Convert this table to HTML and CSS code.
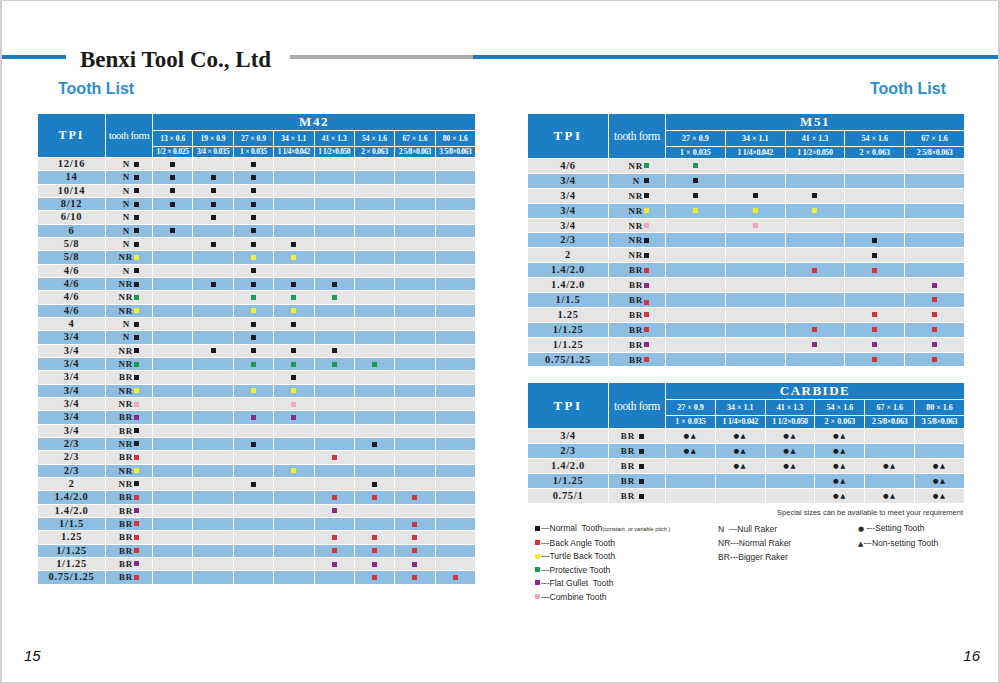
FILE: index.html
```html
<!DOCTYPE html>
<html lang="en">
<head>
<meta charset="utf-8">
<title>Benxi Tool Co., Ltd - Tooth List</title>
<link rel="stylesheet" href="styles.css">
</head>
<body>
<div class="page">
  <header class="masthead">
    <span class="rule rule-blue rule-lead"></span>
    <h1 class="brand">Benxi Tool Co., Ltd</h1>
    <span class="rule rule-gray"></span>
    <span class="rule rule-blue rule-tail"></span>
  </header>

  <div class="section-titles">
    <h2 class="section-title">Tooth List</h2>
    <h2 class="section-title">Tooth List</h2>
  </div>

  <main class="spread">
    <section class="sheet sheet-left">
      <table class="grid grid-m42">
        <colgroup><col class="w-tpi"><col class="w-tf"><col span="8"></colgroup>
        <thead>
          <tr class="hr1">
            <th rowspan="3" class="th-tpi">TPI</th>
            <th rowspan="3" class="th-tf">tooth form</th>
            <th colspan="8" class="th-grade">M42</th>
          </tr>
          <tr class="hr2">
            <th class="th-size">13 × 0.6</th><th class="th-size">19 × 0.9</th><th class="th-size">27 × 0.9</th><th class="th-size">34 × 1.1</th><th class="th-size">41 × 1.3</th><th class="th-size">54 × 1.6</th><th class="th-size">67 × 1.6</th><th class="th-size">80 × 1.6</th>
          </tr>
          <tr class="hr3 hr3-s">
            <th class="th-inch">1/2 × 0.025</th><th class="th-inch">3/4 × 0.035</th><th class="th-inch">1 × 0.035</th><th class="th-inch tight">1 1/4×0.042</th><th class="th-inch tight">1 1/2×0.050</th><th class="th-inch">2 × 0.063</th><th class="th-inch tight">2 5/8×0.063</th><th class="th-inch tight">3 5/8×0.063</th>
          </tr>
        </thead>
        <tbody>
          <tr><td class="tpi">12/16</td><td class="tf">N <i class="sq k"></i></td><td><i class="sq k"></i></td><td></td><td><i class="sq k"></i></td><td></td><td></td><td></td><td></td><td></td></tr>
          <tr><td class="tpi">14</td><td class="tf">N <i class="sq k"></i></td><td><i class="sq k"></i></td><td><i class="sq k"></i></td><td><i class="sq k"></i></td><td></td><td></td><td></td><td></td><td></td></tr>
          <tr><td class="tpi">10/14</td><td class="tf">N <i class="sq k"></i></td><td><i class="sq k"></i></td><td><i class="sq k"></i></td><td><i class="sq k"></i></td><td></td><td></td><td></td><td></td><td></td></tr>
          <tr><td class="tpi">8/12</td><td class="tf">N <i class="sq k"></i></td><td><i class="sq k"></i></td><td><i class="sq k"></i></td><td><i class="sq k"></i></td><td></td><td></td><td></td><td></td><td></td></tr>
          <tr><td class="tpi">6/10</td><td class="tf">N <i class="sq k"></i></td><td></td><td><i class="sq k"></i></td><td><i class="sq k"></i></td><td></td><td></td><td></td><td></td><td></td></tr>
          <tr><td class="tpi">6</td><td class="tf">N <i class="sq k"></i></td><td><i class="sq k"></i></td><td></td><td><i class="sq k"></i></td><td></td><td></td><td></td><td></td><td></td></tr>
          <tr><td class="tpi">5/8</td><td class="tf">N <i class="sq k"></i></td><td></td><td><i class="sq k"></i></td><td><i class="sq k"></i></td><td><i class="sq k"></i></td><td></td><td></td><td></td><td></td></tr>
          <tr><td class="tpi">5/8</td><td class="tf">NR<i class="sq y"></i></td><td></td><td></td><td><i class="sq y"></i></td><td><i class="sq y"></i></td><td></td><td></td><td></td><td></td></tr>
          <tr><td class="tpi">4/6</td><td class="tf">N <i class="sq k"></i></td><td></td><td></td><td><i class="sq k"></i></td><td></td><td></td><td></td><td></td><td></td></tr>
          <tr><td class="tpi">4/6</td><td class="tf">NR<i class="sq k"></i></td><td></td><td><i class="sq k"></i></td><td><i class="sq k"></i></td><td><i class="sq k"></i></td><td><i class="sq k"></i></td><td></td><td></td><td></td></tr>
          <tr><td class="tpi">4/6</td><td class="tf">NR<i class="sq g"></i></td><td></td><td></td><td><i class="sq g"></i></td><td><i class="sq g"></i></td><td><i class="sq g"></i></td><td></td><td></td><td></td></tr>
          <tr><td class="tpi">4/6</td><td class="tf">NR<i class="sq y"></i></td><td></td><td></td><td><i class="sq y"></i></td><td><i class="sq y"></i></td><td></td><td></td><td></td><td></td></tr>
          <tr><td class="tpi">4</td><td class="tf">N <i class="sq k"></i></td><td></td><td></td><td><i class="sq k"></i></td><td><i class="sq k"></i></td><td></td><td></td><td></td><td></td></tr>
          <tr><td class="tpi">3/4</td><td class="tf">N <i class="sq k"></i></td><td></td><td></td><td><i class="sq k"></i></td><td></td><td></td><td></td><td></td><td></td></tr>
          <tr><td class="tpi">3/4</td><td class="tf">NR<i class="sq k"></i></td><td></td><td><i class="sq k"></i></td><td><i class="sq k"></i></td><td><i class="sq k"></i></td><td><i class="sq k"></i></td><td></td><td></td><td></td></tr>
          <tr><td class="tpi">3/4</td><td class="tf">NR<i class="sq g"></i></td><td></td><td></td><td><i class="sq g"></i></td><td><i class="sq g"></i></td><td><i class="sq g"></i></td><td><i class="sq g"></i></td><td></td><td></td></tr>
          <tr><td class="tpi">3/4</td><td class="tf">BR<i class="sq k"></i></td><td></td><td></td><td></td><td><i class="sq k"></i></td><td></td><td></td><td></td><td></td></tr>
          <tr><td class="tpi">3/4</td><td class="tf">NR<i class="sq y"></i></td><td></td><td></td><td><i class="sq y"></i></td><td><i class="sq y"></i></td><td></td><td></td><td></td><td></td></tr>
          <tr><td class="tpi">3/4</td><td class="tf">NR<i class="sq p"></i></td><td></td><td></td><td></td><td><i class="sq p"></i></td><td></td><td></td><td></td><td></td></tr>
          <tr><td class="tpi">3/4</td><td class="tf">BR<i class="sq v"></i></td><td></td><td></td><td><i class="sq v"></i></td><td><i class="sq v"></i></td><td></td><td></td><td></td><td></td></tr>
          <tr><td class="tpi">3/4</td><td class="tf">BR<i class="sq k"></i></td><td></td><td></td><td></td><td></td><td></td><td></td><td></td><td></td></tr>
          <tr><td class="tpi">2/3</td><td class="tf">NR<i class="sq k"></i></td><td></td><td></td><td><i class="sq k"></i></td><td></td><td></td><td><i class="sq k"></i></td><td></td><td></td></tr>
          <tr><td class="tpi">2/3</td><td class="tf">BR<i class="sq r"></i></td><td></td><td></td><td></td><td></td><td><i class="sq r"></i></td><td></td><td></td><td></td></tr>
          <tr><td class="tpi">2/3</td><td class="tf">NR<i class="sq y"></i></td><td></td><td></td><td></td><td><i class="sq y"></i></td><td></td><td></td><td></td><td></td></tr>
          <tr><td class="tpi">2</td><td class="tf">NR<i class="sq k"></i></td><td></td><td></td><td><i class="sq k"></i></td><td></td><td></td><td><i class="sq k"></i></td><td></td><td></td></tr>
          <tr><td class="tpi">1.4/2.0</td><td class="tf">BR<i class="sq r"></i></td><td></td><td></td><td></td><td></td><td><i class="sq r"></i></td><td><i class="sq r"></i></td><td><i class="sq r"></i></td><td></td></tr>
          <tr><td class="tpi">1.4/2.0</td><td class="tf">BR<i class="sq v"></i></td><td></td><td></td><td></td><td></td><td><i class="sq v"></i></td><td></td><td></td><td></td></tr>
          <tr><td class="tpi">1/1.5</td><td class="tf">BR<i class="sq r"></i></td><td></td><td></td><td></td><td></td><td></td><td></td><td><i class="sq r"></i></td><td></td></tr>
          <tr><td class="tpi">1.25</td><td class="tf">BR<i class="sq r"></i></td><td></td><td></td><td></td><td></td><td><i class="sq r"></i></td><td><i class="sq r"></i></td><td><i class="sq r"></i></td><td></td></tr>
          <tr><td class="tpi">1/1.25</td><td class="tf">BR<i class="sq r"></i></td><td></td><td></td><td></td><td></td><td><i class="sq r"></i></td><td><i class="sq r"></i></td><td><i class="sq r"></i></td><td></td></tr>
          <tr><td class="tpi">1/1.25</td><td class="tf">BR<i class="sq v"></i></td><td></td><td></td><td></td><td></td><td><i class="sq v"></i></td><td><i class="sq v"></i></td><td><i class="sq v"></i></td><td></td></tr>
          <tr><td class="tpi">0.75/1.25</td><td class="tf">BR<i class="sq r"></i></td><td></td><td></td><td></td><td></td><td></td><td><i class="sq r"></i></td><td><i class="sq r"></i></td><td><i class="sq r"></i></td></tr>
        </tbody>
      </table>
    </section>

    <section class="sheet sheet-right">
      <table class="grid grid-m51">
        <colgroup><col class="w-tpi-r"><col class="w-tf-r"><col span="5"></colgroup>
        <thead>
          <tr class="hr1">
            <th rowspan="3" class="th-tpi th-tpi-r">TPI</th>
            <th rowspan="3" class="th-tf th-tf-r">tooth form</th>
            <th colspan="5" class="th-grade">M51</th>
          </tr>
          <tr class="hr2 hr2-r">
            <th class="th-size">27 × 0.9</th><th class="th-size">34 × 1.1</th><th class="th-size">41 × 1.3</th><th class="th-size">54 × 1.6</th><th class="th-size">67 × 1.6</th>
          </tr>
          <tr class="hr3 hr3-m">
            <th class="th-inch">1 × 0.035</th><th class="th-inch tight">1 1/4×0.042</th><th class="th-inch tight">1 1/2×0.050</th><th class="th-inch">2 × 0.063</th><th class="th-inch tight">2 5/8×0.063</th>
          </tr>
        </thead>
        <tbody class="rows-m51">
          <tr><td class="tpi">4/6</td><td class="tf tf-m">NR<i class="sq g"></i></td><td><i class="sq g"></i></td><td></td><td></td><td></td><td></td></tr>
          <tr><td class="tpi">3/4</td><td class="tf tf-m">N <i class="sq k"></i></td><td><i class="sq k"></i></td><td></td><td></td><td></td><td></td></tr>
          <tr><td class="tpi">3/4</td><td class="tf tf-m">NR<i class="sq k"></i></td><td><i class="sq k"></i></td><td><i class="sq k"></i></td><td><i class="sq k"></i></td><td></td><td></td></tr>
          <tr><td class="tpi">3/4</td><td class="tf tf-m">NR<i class="sq y"></i></td><td><i class="sq y"></i></td><td><i class="sq y"></i></td><td><i class="sq y"></i></td><td></td><td></td></tr>
          <tr><td class="tpi">3/4</td><td class="tf tf-m">NR<i class="sq p"></i></td><td></td><td><i class="sq p"></i></td><td></td><td></td><td></td></tr>
          <tr><td class="tpi">2/3</td><td class="tf tf-m">NR<i class="sq k"></i></td><td></td><td></td><td></td><td><i class="sq k"></i></td><td></td></tr>
          <tr><td class="tpi">2</td><td class="tf tf-m">NR<i class="sq k"></i></td><td></td><td></td><td></td><td><i class="sq k"></i></td><td></td></tr>
          <tr><td class="tpi">1.4/2.0</td><td class="tf tf-m">BR<i class="sq r"></i></td><td></td><td></td><td><i class="sq r"></i></td><td><i class="sq r"></i></td><td></td></tr>
          <tr><td class="tpi">1.4/2.0</td><td class="tf tf-m">BR<i class="sq v"></i></td><td></td><td></td><td></td><td></td><td><i class="sq v"></i></td></tr>
          <tr><td class="tpi">1/1.5</td><td class="tf tf-m">BR<i class="sq r sq-low"></i></td><td></td><td></td><td></td><td></td><td><i class="sq r"></i></td></tr>
          <tr><td class="tpi">1.25</td><td class="tf tf-m">BR<i class="sq r"></i></td><td></td><td></td><td></td><td><i class="sq r"></i></td><td><i class="sq r"></i></td></tr>
          <tr><td class="tpi">1/1.25</td><td class="tf tf-m">BR<i class="sq r"></i></td><td></td><td></td><td><i class="sq r"></i></td><td><i class="sq r"></i></td><td><i class="sq r"></i></td></tr>
          <tr><td class="tpi">1/1.25</td><td class="tf tf-m">BR<i class="sq v"></i></td><td></td><td></td><td><i class="sq v"></i></td><td><i class="sq v"></i></td><td><i class="sq v"></i></td></tr>
          <tr><td class="tpi">0.75/1.25</td><td class="tf tf-m">BR<i class="sq r"></i></td><td></td><td></td><td></td><td><i class="sq r"></i></td><td><i class="sq r"></i></td></tr>
        </tbody>
      </table>

      <table class="grid grid-carbide">
        <colgroup><col class="w-tpi-r"><col class="w-tf-r"><col span="6"></colgroup>
        <thead>
          <tr class="hr1">
            <th rowspan="3" class="th-tpi th-tpi-r">TPI</th>
            <th rowspan="3" class="th-tf th-tf-r">tooth form</th>
            <th colspan="6" class="th-grade">CARBIDE</th>
          </tr>
          <tr class="hr2 hr2-r">
            <th class="th-size">27 × 0.9</th><th class="th-size">34 × 1.1</th><th class="th-size">41 × 1.3</th><th class="th-size">54 × 1.6</th><th class="th-size">67 × 1.6</th><th class="th-size">80 × 1.6</th>
          </tr>
          <tr class="hr3 hr3-c">
            <th class="th-inch">1 × 0.035</th><th class="th-inch tight">1 1/4×0.042</th><th class="th-inch tight">1 1/2×0.050</th><th class="th-inch">2 × 0.063</th><th class="th-inch tight">2 5/8×0.063</th><th class="th-inch tight">3 5/8×0.063</th>
          </tr>
        </thead>
        <tbody class="rows-carbide">
          <tr><td class="tpi">3/4</td><td class="tf tf-c">BR <i class="sq k"></i></td><td class="st">●▲</td><td class="st">●▲</td><td class="st">●▲</td><td class="st">●▲</td><td></td><td></td></tr>
          <tr><td class="tpi">2/3</td><td class="tf tf-c">BR <i class="sq k"></i></td><td class="st">●▲</td><td class="st">●▲</td><td class="st">●▲</td><td class="st">●▲</td><td></td><td></td></tr>
          <tr><td class="tpi">1.4/2.0</td><td class="tf tf-c">BR <i class="sq k"></i></td><td></td><td class="st">●▲</td><td class="st">●▲</td><td class="st">●▲</td><td class="st">●▲</td><td class="st">●▲</td></tr>
          <tr><td class="tpi">1/1.25</td><td class="tf tf-c">BR <i class="sq k"></i></td><td></td><td></td><td></td><td class="st">●▲</td><td></td><td class="st">●▲</td></tr>
          <tr><td class="tpi">0.75/1</td><td class="tf tf-c">BR <i class="sq k"></i></td><td></td><td></td><td></td><td class="st">●▲</td><td class="st">●▲</td><td class="st">●▲</td></tr>
        </tbody>
      </table>

      <p class="note">Special sizes can be available to meet your requirement</p>

      <div class="legend">
        <ul class="lg-col lg-col1">
          <li class="lg-item"><i class="sq k"></i>—Normal&nbsp; Tooth<small class="lg-small">(constant&nbsp; or variable pitch )</small></li>
          <li class="lg-item"><i class="sq r"></i>---Back Angle Tooth</li>
          <li class="lg-item"><i class="sq y"></i>---Turtle Back Tooth</li>
          <li class="lg-item"><i class="sq g"></i>---Protective Tooth</li>
          <li class="lg-item"><i class="sq v"></i>---Flat Gullet&nbsp; Tooth</li>
          <li class="lg-item"><i class="sq p"></i>---Combine Tooth</li>
        </ul>
        <ul class="lg-col lg-col2">
          <li class="lg-item lg-wide">N&nbsp; —Null Raker</li>
          <li class="lg-item lg-wide">NR---Normal Raker</li>
          <li class="lg-item lg-wide">BR---Bigger Raker</li>
        </ul>
        <ul class="lg-col lg-col3">
          <li class="lg-item"><span class="glyph">●</span> ---Setting Tooth</li>
          <li class="lg-item"><span class="glyph">▲</span>---Non-setting Tooth</li>
        </ul>
      </div>
    </section>
  </main>

  <footer class="folio">
    <span class="folio-num">15</span>
    <span class="folio-num">16</span>
  </footer>
</div>
</body>
</html>
```

FILE: styles.css
```css
html, body {
  margin: 0;
  padding: 0;
  background: #ffffff;
}

.page {
  width: 1000px;
  height: 683px;
  box-sizing: border-box;
  border: 1px solid #cfcfcf;
  border-left-width: 2px;
  border-right-width: 2px;
  display: flex;
  flex-direction: column;
  font-family: "Liberation Serif", "Times New Roman", serif;
  color: #222;
  overflow: hidden;
}

/* ---------- masthead ---------- */
.masthead {
  display: flex;
  align-items: center;
  height: 30px;
  margin-top: 41px;
}

.rule {
  display: block;
  height: 4px;
}

.rule-blue { background: #1a7dc2; }
.rule-gray { background: #ababab; width: 183px; }
.rule-lead { width: 64px; }
.rule-tail { flex: 1; }

.brand {
  margin: 6px 19px 0 14px;
  font-family: "Liberation Serif", "Times New Roman", serif;
  font-weight: bold;
  font-size: 23px;
  line-height: 22px;
  color: #1a1a1a;
  white-space: nowrap;
}

/* ---------- titles ---------- */
.section-titles {
  display: flex;
  justify-content: space-between;
  margin-top: 8px;
  padding: 0 52px 0 56px;
}

.section-title {
  margin: 0;
  font-family: "Liberation Sans", Arial, sans-serif;
  font-weight: bold;
  font-size: 16px;
  line-height: 18px;
  color: #2a8fd2;
}

/* ---------- spread ---------- */
.spread {
  display: flex;
  gap: 51px;
  margin-top: 15px;
  padding-left: 35px;
}

.sheet-right {
  display: flex;
  flex-direction: column;
}

/* ---------- tables ---------- */
.grid {
  border-collapse: separate;
  border-spacing: 1px;
  table-layout: fixed;
  background: #ffffff;
}

.grid-m42 { width: 439px; }
.grid-m51, .grid-carbide { width: 438px; }
.grid-carbide { margin-top: 15px; }

.w-tpi { width: 67px; }
.w-tf { width: 46px; }
.w-tpi-r { width: 80px; }
.w-tf-r { width: 56px; }

.grid th {
  background: #1c7ec5;
  color: #ffffff;
  padding: 0;
  font-family: "Liberation Serif", "Times New Roman", serif;
  text-align: center;
  white-space: nowrap;
  overflow: hidden;
}

.hr1 th { height: 16px; }
.hr2 th { height: 15px; }
.hr3-s th { height: 10px; }
.hr3-m th { height: 11px; }
.hr3-c th { height: 12px; }

.th-tpi {
  font-size: 12px;
  font-weight: bold;
  letter-spacing: 2px;
}

.th-tpi-r {
  font-size: 13px;
  letter-spacing: 2.5px;
}

.th-tf {
  font-size: 10.5px;
  font-weight: normal;
  letter-spacing: -0.4px;
}

.th-tf-r {
  font-size: 11.5px;
  letter-spacing: -0.3px;
}

.th-grade {
  font-size: 13px;
  font-weight: bold;
  letter-spacing: 1.5px;
  line-height: 16px;
}

.th-size {
  font-size: 7.5px;
  font-weight: bold;
  line-height: 15px;
}

.hr2-r .th-size { font-size: 8px; }

.th-inch {
  font-size: 7.5px;
  font-weight: bold;
  line-height: 10px;
  letter-spacing: -0.2px;
}

.th-inch.tight {
  font-size: 7.4px;
  letter-spacing: -0.35px;
}

.hr3-m .th-inch,
.hr3-c .th-inch { font-size: 8px; letter-spacing: 0; }
.hr3-m .th-inch.tight,
.hr3-c .th-inch.tight { font-size: 8px; letter-spacing: -0.3px; }

.grid td {
  padding: 0;
  height: 12.33px;
  text-align: center;
  vertical-align: middle;
  background: #e5e5e6;
  color: #1e1e24;
  white-space: nowrap;
  overflow: hidden;
}

.grid tbody tr:nth-child(even) td { background: #8ebfe2; }

.rows-m51 td { height: 13.9px; }
.rows-carbide td { height: 14px; }

.tpi {
  font-size: 10.5px;
  font-weight: bold;
  letter-spacing: 0.7px;
  line-height: 12px;
}

.grid td.tf {
  text-align: right;
  padding-right: 13px;
  font-size: 9px;
  font-weight: bold;
  letter-spacing: 0.8px;
  line-height: 12px;
}

.grid td.tf-m { padding-right: 16px; }
.grid td.tf-c { padding-right: 21px; }

/* ---------- squares ---------- */
.sq {
  display: block;
  width: 5px;
  height: 5px;
  margin: 0 auto;
}

.tf .sq,
.lg-item .sq {
  display: inline-block;
  vertical-align: middle;
  margin: -2px 0 0 0;
}

.tf .sq { margin-left: 1px; }
.tf .sq-low { margin-top: 4px; }

.k { background: #1b1b1f; }
.y { background: #f0ef2a; }
.g { background: #1f9a52; }
.p { background: #f2a9c7; }
.v { background: #8a2a87; }
.r { background: #d3343a; }

.grid td.st {
  font-family: "DejaVu Sans", sans-serif;
  font-size: 6.5px;
  letter-spacing: 1.5px;
  line-height: 12px;
  color: #1b1b1f;
}

/* ---------- notes & legend ---------- */
.note {
  margin: 4px 0 0 0;
  padding-right: 2px;
  text-align: right;
  font-family: "Liberation Sans", Arial, sans-serif;
  font-size: 7.5px;
  line-height: 10px;
  color: #333;
}

.legend {
  display: flex;
  margin-top: 4px;
  padding-left: 8px;
  font-family: "Liberation Sans", Arial, sans-serif;
  font-size: 8.5px;
  color: #2a2a2a;
}

.lg-col {
  list-style: none;
  margin: 0;
  padding: 0;
}

.lg-col1 { width: 183px; }
.lg-col2 { width: 140px; }

.lg-item {
  line-height: 13.4px;
  white-space: nowrap;
}

.lg-wide { line-height: 14px; }

.lg-item .sq { margin-right: 1px; }

.lg-small {
  font-size: 5.5px;
}

.glyph {
  font-family: "DejaVu Sans", sans-serif;
  font-size: 7px;
}

/* ---------- folio ---------- */
.folio {
  margin-top: auto;
  display: flex;
  justify-content: space-between;
  padding: 0 18px 18px 22px;
  font-family: "Liberation Sans", Arial, sans-serif;
  font-style: italic;
  font-size: 15px;
  line-height: 17px;
  color: #111;
}
```
